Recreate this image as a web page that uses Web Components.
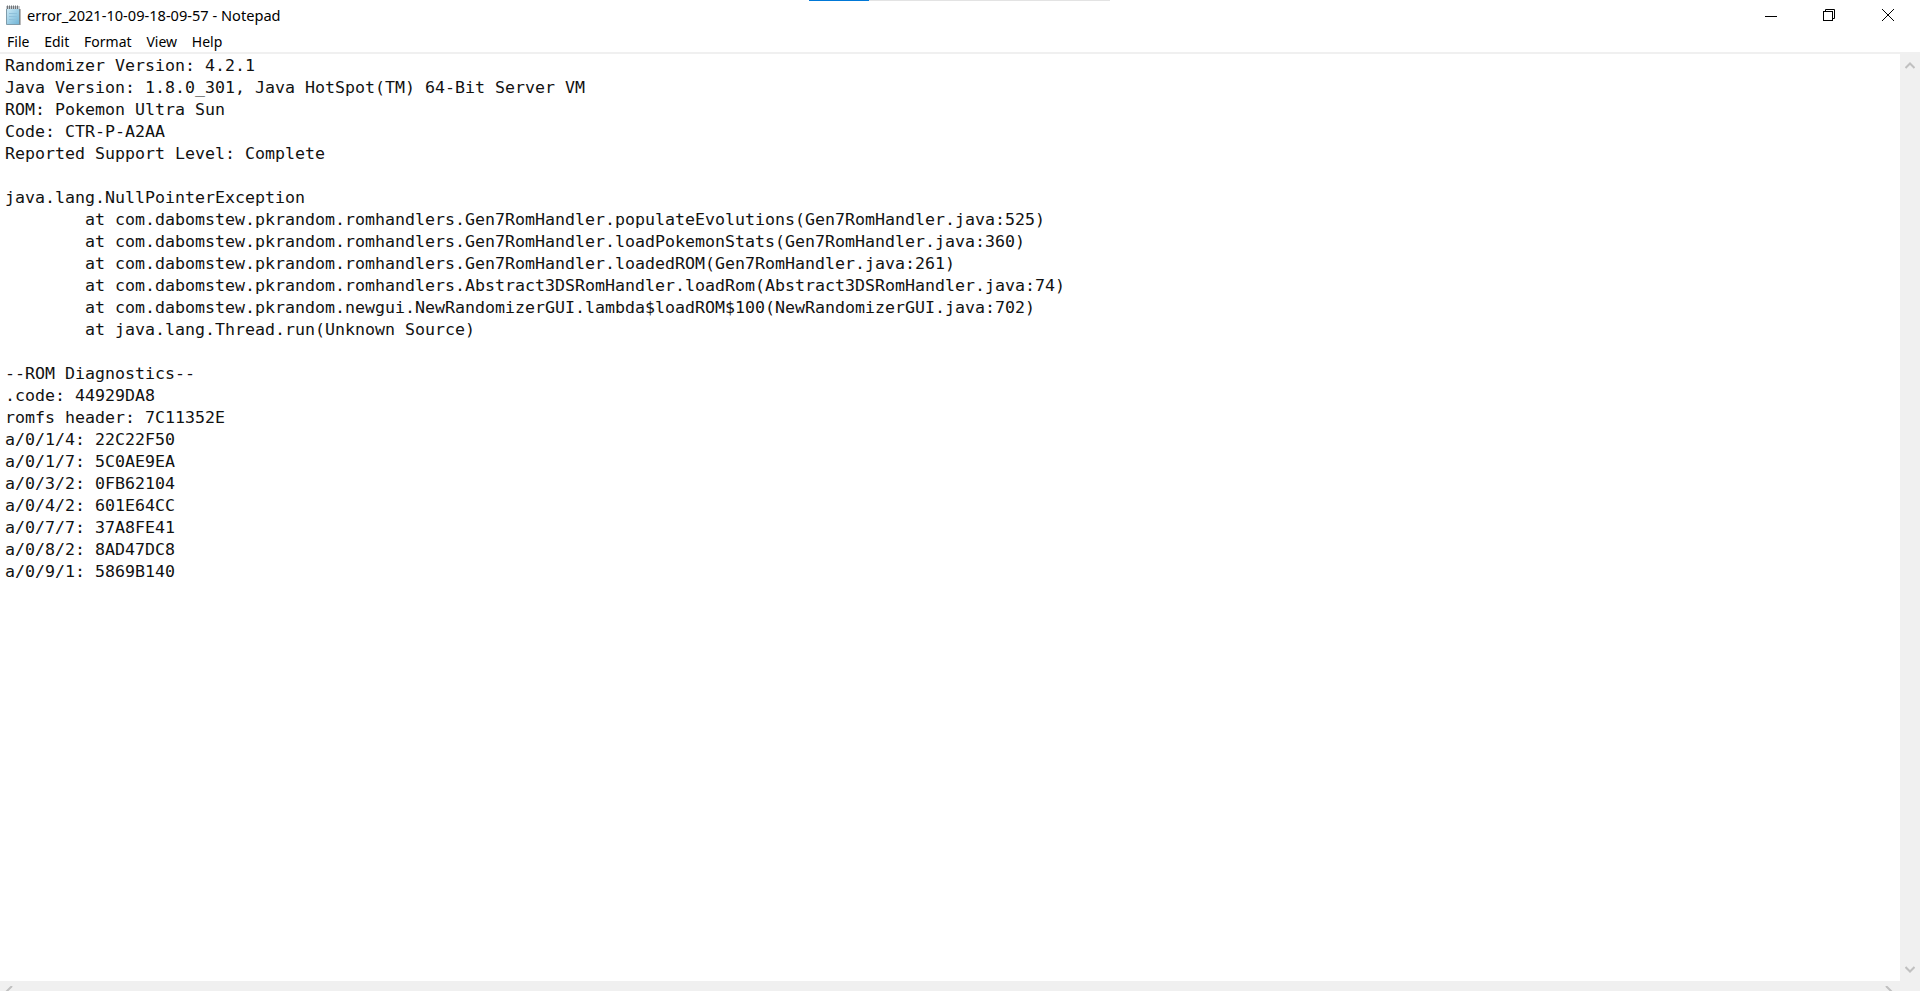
<!DOCTYPE html>
<html>
<head>
<meta charset="utf-8">
<title>Notepad</title>
<style>
  html, body { margin: 0; padding: 0; height: 100%; overflow: hidden; background: #fff; }
</style>
</head>
<body>
<notepad-window>
  <title-bar slot="title">error_2021-10-09-18-09-57 - Notepad</title-bar>
  <menu-bar slot="menu"></menu-bar>
  <text-area slot="text">Randomizer Version: 4.2.1
Java Version: 1.8.0_301, Java HotSpot(TM) 64-Bit Server VM
ROM: Pokemon Ultra Sun
Code: CTR-P-A2AA
Reported Support Level: Complete

java.lang.NullPointerException
	at com.dabomstew.pkrandom.romhandlers.Gen7RomHandler.populateEvolutions(Gen7RomHandler.java:525)
	at com.dabomstew.pkrandom.romhandlers.Gen7RomHandler.loadPokemonStats(Gen7RomHandler.java:360)
	at com.dabomstew.pkrandom.romhandlers.Gen7RomHandler.loadedROM(Gen7RomHandler.java:261)
	at com.dabomstew.pkrandom.romhandlers.Abstract3DSRomHandler.loadRom(Abstract3DSRomHandler.java:74)
	at com.dabomstew.pkrandom.newgui.NewRandomizerGUI.lambda$loadROM$100(NewRandomizerGUI.java:702)
	at java.lang.Thread.run(Unknown Source)

--ROM Diagnostics--
.code: 44929DA8
romfs header: 7C11352E
a/0/1/4: 22C22F50
a/0/1/7: 5C0AE9EA
a/0/3/2: 0FB62104
a/0/4/2: 601E64CC
a/0/7/7: 37A8FE41
a/0/8/2: 8AD47DC8
a/0/9/1: 5869B140</text-area>
  <scroll-bar slot="vscroll"></scroll-bar>
  <h-scroll-bar slot="hscroll"></h-scroll-bar>
</notepad-window>

<script>
// ventana completa: barra de titulo, menu, texto y scrollbars
class NotepadWindow extends HTMLElement {
  constructor() {
    super();
    this.attachShadow({ mode: "open" });
  }
  connectedCallback() {
    this.shadowRoot.innerHTML = `
      <style>
        :host { display: grid; width: 1920px; height: 991px; position: relative; overflow: hidden;
                grid-template-rows: 30px 22px 2px 1fr 10px; grid-template-columns: 1fr 20px; background: #fff; }
        .top { grid-column: 1 / 3; }
        .line { grid-column: 1 / 3; background: #f0f0f0; }
        .bottom { grid-column: 1 / 3; }
        /* franja de progreso que queda arriba de la captura */
        .progress { position: absolute; left: 809px; top: 0; width: 301px; height: 1px; background: #e3e3e3; }
        .progress i { display: block; width: 60px; height: 1px; background: #0078d7; }
      </style>
      <div class="top"><slot name="title"></slot></div>
      <div class="top"><slot name="menu"></slot></div>
      <div class="line"></div>
      <slot name="text"></slot>
      <slot name="vscroll"></slot>
      <div class="bottom"><slot name="hscroll"></slot></div>
      <div class="progress"><i></i></div>
    `;
  }
}

class TitleBar extends HTMLElement {
  constructor() {
    super();
    this.attachShadow({ mode: "open" });
  }
  connectedCallback() {
    this.shadowRoot.innerHTML = `
      <style>
        :host { display: flex; align-items: center; height: 30px; font: 14.6px "Noto Sans", "Open Sans", sans-serif; color: #000; }
        .icon { width: 18px; height: 20px; margin-left: 4px; margin-right: 5px; flex: none; }
        .text { flex: 1; white-space: nowrap; }
        .btns { display: flex; height: 30px; padding-right: 3px; }
        .btn { width: 58.5px; height: 30px; display: flex; align-items: center; justify-content: center; }
        svg { display: block; }
      </style>
      <svg class="icon" viewBox="0 0 18 20">
        <defs>
          <linearGradient id="pg" x1="0" y1="0" x2="1" y2="1">
            <stop offset="0" stop-color="#cdeaf6"/>
            <stop offset="1" stop-color="#6fb4d6"/>
          </linearGradient>
        </defs>
        <path d="M2.5 3.5H15.5V19.5H2.5Z" fill="url(#pg)" stroke="#7f9cab"/>
        <path d="M5 8.5H13M5 11.5H13M5 14.5H13" stroke="#8fc0da" stroke-width="1"/>
        <path d="M16 4V20" stroke="#777" stroke-width="1"/>
        <rect x="2" y="1" width="14" height="3" fill="#c8ccd0"/>
        <path d="M3.5 0.5V4M5.5 0.5V4M7.5 0.5V4M9.5 0.5V4M11.5 0.5V4M13.5 0.5V4" stroke="#6f7478" stroke-width="1"/>
      </svg>
      <div class="text"><slot></slot></div>
      <div class="btns">
        <div class="btn"><svg width="12" height="12" viewBox="0 0 12 12"><path d="M0 7.5H12" stroke="#000" stroke-width="1"/></svg></div>
        <div class="btn"><svg width="12" height="12" viewBox="0 0 12 12" fill="none" stroke="#000"><rect x="0.5" y="2.5" width="9" height="9"/><path d="M2.5 2.5V0.5H11.5V9.5H9.5"/></svg></div>
        <div class="btn"><svg width="12" height="12" viewBox="0 0 12 12" fill="none" stroke="#000"><path d="M0 0L12 12M12 0L0 12"/></svg></div>
      </div>
    `;
  }
}

class MenuBar extends HTMLElement {
  constructor() {
    super();
    this.attachShadow({ mode: "open" });
  }
  connectedCallback() {
    const items = ["File", "Edit", "Format", "View", "Help"];
    this.shadowRoot.innerHTML = `
      <style>
        :host { display: flex; height: 22px; align-items: center; padding-left: 7px; gap: 14.8px;
                font: 14px "Noto Sans", "Open Sans", sans-serif; color: #000; }
      </style>
      ${items.map((t) => `<span>${t}</span>`).join("")}
    `;
  }
}

class TextArea extends HTMLElement {
  constructor() {
    super();
    this.attachShadow({ mode: "open" });
  }
  connectedCallback() {
    // sin espacios entre las etiquetas: el host usa white-space: pre y los mostraria
    this.shadowRoot.innerHTML = `<style>
        :host { display: block; overflow: hidden; padding: 1px 0 0 5px; background: #fff; color: #111;
                font: 16.62px/22px "DejaVu Sans Mono", monospace; white-space: pre; tab-size: 8; }
      </style><slot></slot>`;
  }
}

class ScrollBar extends HTMLElement {
  constructor() {
    super();
    this.attachShadow({ mode: "open" });
  }
  connectedCallback() {
    this.shadowRoot.innerHTML = `
      <style>
        :host { display: flex; flex-direction: column; justify-content: space-between; background: #f0f0f0; }
        svg { display: block; margin: 8px auto; }
      </style>
      <svg width="10" height="7" viewBox="0 0 10 7" fill="none" stroke="#c0c0c0" stroke-width="2"><path d="M0.5 6L5 1.5L9.5 6"/></svg>
      <svg width="10" height="7" viewBox="0 0 10 7" fill="none" stroke="#c0c0c0" stroke-width="2"><path d="M0.5 1L5 5.5L9.5 1"/></svg>
    `;
  }
}

class HScrollBar extends HTMLElement {
  constructor() {
    super();
    this.attachShadow({ mode: "open" });
  }
  connectedCallback() {
    this.shadowRoot.innerHTML = `
      <style>
        :host { display: flex; justify-content: space-between; height: 10px; overflow: hidden; background: #f0f0f0; padding: 5px 27px 0 5px; box-sizing: border-box; }
        svg { display: block; }
      </style>
      <svg width="8" height="10" viewBox="0 0 8 10" fill="none" stroke="#c0c0c0" stroke-width="2"><path d="M7 0L2 5L7 10"/></svg>
      <svg width="8" height="10" viewBox="0 0 8 10" fill="none" stroke="#c0c0c0" stroke-width="2"><path d="M1 0L6 5L1 10"/></svg>
    `;
  }
}

window.customElements.define("notepad-window", NotepadWindow);
window.customElements.define("title-bar", TitleBar);
window.customElements.define("menu-bar", MenuBar);
window.customElements.define("text-area", TextArea);
window.customElements.define("scroll-bar", ScrollBar);
window.customElements.define("h-scroll-bar", HScrollBar);
</script>
</body>
</html>
